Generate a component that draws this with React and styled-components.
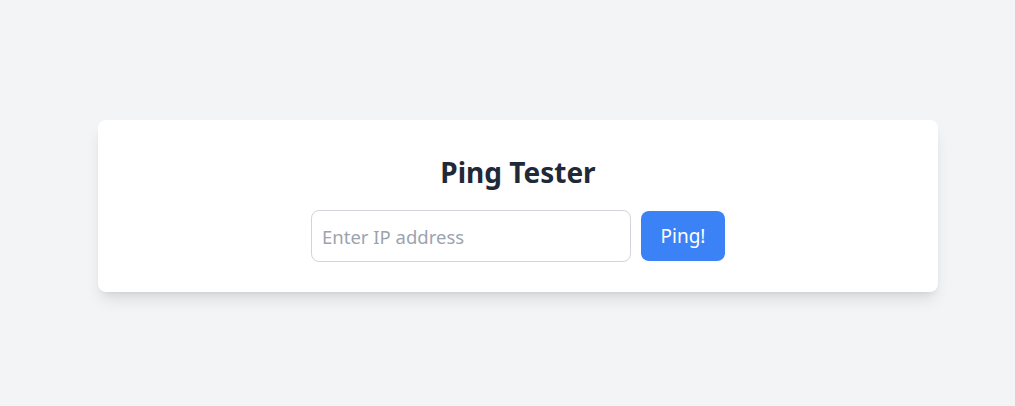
import React from 'react'
import styled, { createGlobalStyle } from 'styled-components'

const GlobalStyle = createGlobalStyle`
	html, body {
		margin: 0;
		padding: 0;
		background: #f3f4f6;
		font-family: "Noto Sans", "Open Sans", sans-serif;
	}
`

const Page = styled.main`
	display: flex;
	align-items: center;
	justify-content: center;
	min-height: 406px;
	padding: 6px 0 0 21px;
	box-sizing: border-box;
`

const Card = styled.section`
	width: 840px;
	box-sizing: border-box;
	background: #ffffff;
	border-radius: 8px;
	box-shadow: 0 10px 15px -3px rgba(0, 0, 0, 0.1), 0 4px 6px -4px rgba(0, 0, 0, 0.1);
	padding: 33px 32px 30px;
	display: flex;
	flex-direction: column;
	align-items: center;
`

const Title = styled.h1`
	margin: 0 0 19px;
	font-size: 28px;
	line-height: 38px;
	font-weight: 700;
	color: #1f2937;
`

const Form = styled.form`
	display: flex;
	align-items: center;
	gap: 10px;
`

const Input = styled.input`
	width: 320px;
	height: 52px;
	box-sizing: border-box;
	padding: 0 10px;
	border: 1px solid #d1d5db;
	border-radius: 8px;
	font-family: inherit;
	font-size: 18.5px;
	color: #1f2937;
	outline: none;

	&::placeholder {
		color: #9ca3af;
	}
`

const Button = styled.button`
	width: 84px;
	height: 50px;
	border: none;
	border-radius: 8px;
	background: #3b82f6;
	color: #ffffff;
	font-family: inherit;
	font-size: 19px;
	cursor: pointer;
`

const App = () => (
	<>
		<GlobalStyle />
		<Page>
			<Card>
				<Title>Ping Tester</Title>
				<Form onSubmit={e => e.preventDefault()}>
					<Input type="text" placeholder="Enter IP address" />
					<Button type="submit">Ping!</Button>
				</Form>
			</Card>
		</Page>
	</>
)

export default App
